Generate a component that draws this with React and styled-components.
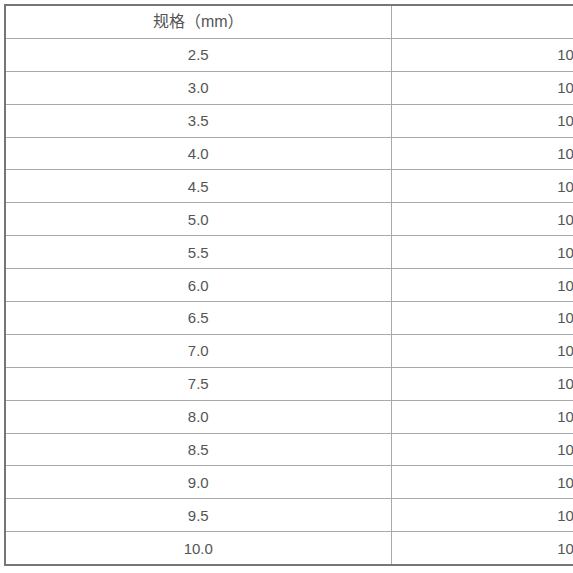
import React from 'react';
import styled, { createGlobalStyle } from 'styled-components';

const sizes = ['2.5', '3.0', '3.5', '4.0', '4.5', '5.0', '5.5', '6.0', '6.5', '7.0', '7.5', '8.0', '8.5', '9.0', '9.5', '10.0'];

export default function App() {
    return (
        <>
            <GlobalStyle />
            <Page>
                <SpecTable>
                    <colgroup>
                        <col style={{ width: 386 }} />
                        <col style={{ width: 358 }} />
                    </colgroup>
                    <tbody>
                        <tr>
                            <Cell>
                                <HeadLabel>规格（mm）</HeadLabel>
                            </Cell>
                            <Cell></Cell>
                        </tr>
                        {sizes.map((s) => (
                            <tr key={s}>
                                <Cell>{s}</Cell>
                                <Cell>100</Cell>
                            </tr>
                        ))}
                    </tbody>
                </SpecTable>
            </Page>
        </>
    );
}

const GlobalStyle = createGlobalStyle`
    html, body {
        margin: 0;
        background: #ffffff;
        overflow: hidden;
    }
`;

const Page = styled.div`
    padding: 4px 0 0 4px;
    width: 900px;
`;

const SpecTable = styled.table`
    table-layout: fixed;
    width: 744px;
    border-collapse: collapse;
    border: 2px solid #767676;
    font-family: "Liberation Sans", Arial, "Noto Sans CJK SC", sans-serif;
    font-size: 15px;
    color: #555555;
`;

const Cell = styled.td`
    height: 31.9px;
    padding: 0;
    text-align: center;
    vertical-align: middle;
    border: 1px solid #aaaaaa;
`;

const HeadLabel = styled.span`
    display: inline-block;
    font-size: 16px;
    margin-bottom: 4px;
`;
